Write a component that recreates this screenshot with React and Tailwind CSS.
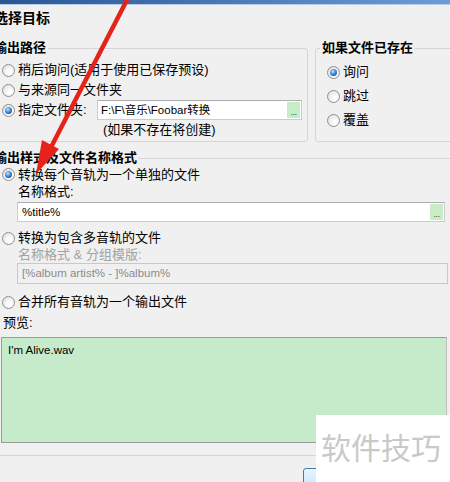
import React from "react";

function Radio({ checked }) {
  return (
    <span className="w-[13px] h-[13px] rounded-full border border-[#8e8f8f] bg-[radial-gradient(circle_at_65%_65%,#ffffff_15%,#dcdcdc_95%)] flex items-center justify-center shrink-0">
      {checked && (
        <span className="w-[7px] h-[7px] rounded-full bg-[radial-gradient(circle_at_40%_35%,#bfe6ff,#2a78cc_55%,#0b3e7e)]" />
      )}
    </span>
  );
}

function Dots() {
  return (
    <span className="w-[13px] self-stretch my-[1px] mr-[1px] bg-[#c8ebc8] flex items-end justify-center text-[9px] leading-[12px] text-[#3a5a3a] tracking-[-0.5px]">
      ...
    </span>
  );
}

export default function App() {
  const font = "font-['Liberation_Sans','Noto_Sans_CJK_SC',sans-serif]";
  return (
    <div className={`relative w-[450px] h-[482px] overflow-hidden bg-[#f0f0f0] text-black ${font}`}>
      <div className="h-[4px] bg-gradient-to-r from-[#2a5695] to-[#6d9dd6]" />
      <div className="h-[1px] bg-[#b9cbe4]" />
      <div className="h-[27px] leading-[27px] text-[14px] font-bold ml-[-6px] whitespace-nowrap">选择目标</div>

      <div className="flex mt-[9px] items-stretch">
        <fieldset className="ml-[-10px] w-[318px] border border-[#d5d5d5] rounded-[3px] pb-[1px] shrink-0">
          <legend className="ml-[1px] px-[2px] text-[13px] leading-[14px] font-bold">输出路径</legend>
          <div className="pt-[5px] text-[13px]">
            <div className="flex items-center h-[20px] gap-[3px] ml-[11px]">
              <Radio />
              <span className="leading-[20px] whitespace-nowrap">稍后询问(适用于使用已保存预设)</span>
            </div>
            <div className="flex items-center h-[20px] gap-[3px] ml-[11px]">
              <Radio />
              <span className="leading-[20px] whitespace-nowrap">与来源同一文件夹</span>
            </div>
            <div className="flex items-center h-[20px] ml-[11px] pr-[5px]">
              <Radio checked />
              <span className="leading-[20px] whitespace-nowrap ml-[3px] w-[79px]">指定文件夹:</span>
              <div className="flex-1 h-[20px] bg-white border border-[#c9cdd3] border-t-[#abadb3] flex items-stretch">
                <span className="flex-1 pl-[3px] text-[11.5px] leading-[18px] whitespace-nowrap">F:\F\音乐\Foobar转换</span>
                <Dots />
              </div>
            </div>
            <div className="h-[20px] leading-[20px] ml-[112px] whitespace-nowrap">(如果不存在将创建)</div>
          </div>
        </fieldset>

        <fieldset className="ml-[7px] w-[150px] border border-[#d5d5d5] rounded-[3px] shrink-0">
          <legend className="ml-[4px] px-[2px] text-[13px] leading-[14px] font-bold whitespace-nowrap">如果文件已存在</legend>
          <div className="pt-[5px] text-[13px]">
            <div className="flex items-center h-[24px] gap-[3px] ml-[11px]">
              <Radio checked />
              <span>询问</span>
            </div>
            <div className="flex items-center h-[24px] gap-[3px] ml-[11px]">
              <Radio />
              <span>跳过</span>
            </div>
            <div className="flex items-center h-[24px] gap-[3px] ml-[11px]">
              <Radio />
              <span>覆盖</span>
            </div>
          </div>
        </fieldset>
      </div>

      <fieldset className="mt-[9px] ml-[-10px] w-[470px] border border-[#d5d5d5] rounded-[3px] pb-[12px]">
        <legend className="ml-[2px] px-[1px] text-[13px] leading-[14px] font-bold whitespace-nowrap">输出样式及文件名称格式</legend>
        <div className="text-[13px]">
          <div className="flex items-center h-[19px] gap-[3px] ml-[11px]">
            <Radio checked />
            <span className="whitespace-nowrap">转换每个音轨为一个单独的文件</span>
          </div>
          <div className="h-[15px] leading-[15px] ml-[27px] whitespace-nowrap">名称格式:</div>
          <div className="mt-[3px] ml-[26px] w-[428px] h-[20px] bg-white border border-[#c9cdd3] border-t-[#abadb3] flex items-stretch">
            <span className="flex-1 pl-[4px] text-[11.5px] leading-[18px]">%title%</span>
            <Dots />
          </div>

          <div className="mt-[6px] flex items-center h-[20px] gap-[3px] ml-[11px]">
            <Radio />
            <span className="whitespace-nowrap">转换为包含多音轨的文件</span>
          </div>
          <div className="h-[14px] leading-[14px] ml-[27px] whitespace-nowrap text-[#a3a3a3]">名称格式 &amp; 分组模版:</div>
          <div className="mt-[1px] ml-[26px] w-[431px] h-[21px] bg-[#f0f0f0] border border-[#c8c8c8] flex items-center">
            <span className="pl-[4px] text-[11.5px] text-[#8c8c8c] whitespace-nowrap">[%album artist% - ]%album%</span>
          </div>

          <div className="mt-[8px] flex items-center h-[20px] gap-[3px] ml-[11px]">
            <Radio />
            <span className="whitespace-nowrap">合并所有音轨为一个输出文件</span>
          </div>
          <div className="h-[22px] leading-[22px] ml-[12px]">预览:</div>
          <div className="mt-[3px] ml-[10px] w-[446px] h-[106px] bg-[#c6ebca] border border-[#9a9a9a] border-r-[#c0c0c0] pl-[6px] pt-[2px]">
            <span className="text-[11.5px] leading-[14px]">I'm Alive.wav</span>
          </div>
        </div>
      </fieldset>

      <div className="ml-[303px] mt-[12px] w-[80px] h-[23px] rounded-[3px] border border-[#3c7fb1] bg-gradient-to-b from-[#eaf6fd] to-[#bee6fd]" />

      <div className="absolute left-[316px] top-[415px] w-[134px] h-[67px] bg-white flex items-start">
        <span className="mt-[13px] ml-[5px] text-[30px] leading-[36px] text-[#c9c9c9] font-['Noto_Sans_CJK_SC',sans-serif] whitespace-nowrap">
          软件技巧
        </span>
      </div>

      <svg className="absolute left-0 top-0 pointer-events-none" width="450" height="482" viewBox="0 0 450 482">
        <line x1="128" y1="-2" x2="47" y2="155" stroke="#e5231b" strokeWidth="4.5" strokeLinecap="round" />
        <polygon points="36,174 42,140 59,149" fill="#e5231b" />
      </svg>
    </div>
  );
}
